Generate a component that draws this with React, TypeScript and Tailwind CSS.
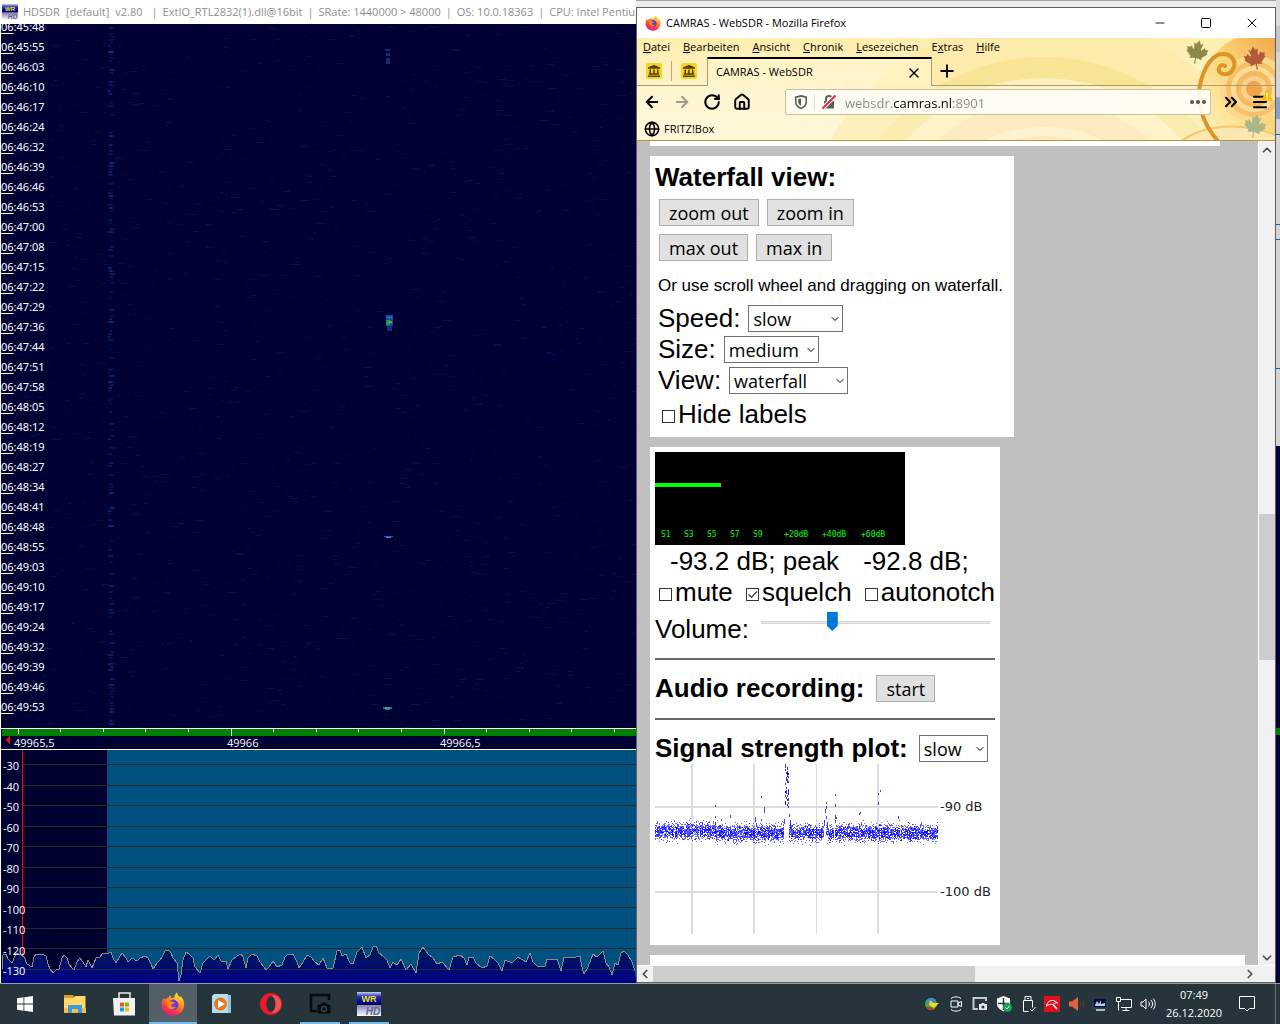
import type { ReactNode } from 'react';
import {
  ArrowLeft,
  ArrowRight,
  ChevronDown,
  ChevronLeft,
  ChevronRight,
  ChevronUp,
  ChevronsRight,
  Globe,
  House,
  Menu,
  Minus,
  Plus,
  RotateCw,
  Square,
  X,
} from 'lucide-react';
import { FaCanadianMapleLeaf, FaLandmark } from 'react-icons/fa';

const TIMES = [
  '45:48', '45:55', '46:03', '46:10', '46:17', '46:24', '46:32', '46:39', '46:46',
  '46:53', '47:00', '47:08', '47:15', '47:22', '47:29', '47:36', '47:44', '47:51',
  '47:58', '48:05', '48:12', '48:19', '48:27', '48:34', '48:41', '48:48', '48:55',
  '49:03', '49:10', '49:17', '49:24', '49:32', '49:39', '49:46', '49:53',
];

const STATUS = [
  'ExtIO_RTL2832(1).dll@16bit',
  'SRate: 1440000 > 48000',
  'OS: 10.0.18363',
  'CPU: Intel Pentium',
];

const TRACE =
  '2,219 3,205 6,204 8,209 12,213 13,211 16,203 21,205 24,207 27,214 32,217 34,207 36,204 42,204 46,206 48,214 50,219 53,223 56,220 59,219 62,208 64,205 67,208 69,214 72,218 74,220 77,212 80,208 83,212 86,217 88,210 92,218 96,208 100,207 103,203 107,204 111,202 113,208 116,213 119,208 122,203 126,208 128,212 132,208 137,211 140,208 145,206 148,208 151,214 153,219 157,213 160,210 162,207 165,201 168,200 171,203 173,208 177,213 179,231 181,225 183,210 186,202 189,204 193,208 195,217 200,223 203,213 207,209 210,206 214,210 218,205 221,211 226,211 228,219 232,210 237,206 241,204 243,207 246,218 248,208 252,204 257,206 260,212 266,220 269,217 273,211 277,217 282,215 285,207 288,204 293,204 297,212 299,218 303,212 307,205 311,207 315,212 319,215 323,208 327,218 333,218 337,201 340,200 342,206 346,204 350,213 353,214 357,202 362,197 366,208 370,205 373,197 376,196 379,203 383,206 387,210 390,218 393,212 397,215 401,209 406,220 411,214 416,223 419,203 423,197 428,204 433,208 437,214 442,212 449,220 453,207 460,205 464,208 467,215 469,207 473,207 476,213 482,218 487,216 490,206 494,209 498,213 502,221 505,210 512,213 518,207 526,212 530,203 533,212 537,216 545,216 547,209 557,209 561,221 564,207 572,208 580,206 582,217 584,224 588,217 593,204 597,207 603,201 606,213 609,217 612,225 615,213 618,215 621,203 624,201 628,205 632,212 635,221';

// small seeded generator so the noise is the same on every render
function createRandom(seed: number) {
  let s = seed;
  return () => {
    s = (s * 1664525 + 1013904223) % 4294967296;
    return s / 4294967296;
  };
}

const rand = createRandom(17);

const speckles = Array.from({ length: 1500 }, () => ({
  x: Math.floor(rand() * 635),
  y: Math.floor(rand() * 704),
  w: 3 + Math.floor(rand() * 6),
  o: 0.08 + rand() * 0.32,
}));

const carrier = Array.from({ length: 190 }, () => ({
  x: 107 + Math.floor(rand() * 3),
  y: Math.floor(rand() * 234) * 3,
  w: 3 + Math.floor(rand() * 3),
  o: 0.15 + rand() * 0.4,
}));

const plotNoise = Array.from({ length: 5200 }, () => {
  const x = Math.floor(rand() * 283);
  const center = x < 60 ? 67 : 69;
  const y = center + (rand() + rand() + rand() + rand() - 2) * 7;
  return { x, y: Math.floor(y) };
}).filter((p) => !(p.x > 128 && p.x < 134) && p.x !== 169 && p.x !== 170 && p.x !== 179);

const plotPeaks = Array.from({ length: 46 }, () => ({
  x: 130 + Math.floor(rand() * 4),
  y: Math.floor(rand() * 43),
}));

const PLOT_POINTS = [
  [60, 41, 2], [60, 52, 2], [60, 58, 3], [66, 55, 2], [75, 51, 3], [106, 32, 2],
  [106, 55, 2], [109, 43, 6], [100, 53, 5], [101, 59, 4], [129, 55, 5], [134, 50, 3],
  [135, 56, 8], [171, 38, 2], [171, 42, 3], [170, 45, 4], [171, 52, 3], [169, 56, 6],
  [172, 58, 5], [180, 30, 2], [180, 40, 3], [180, 51, 4], [181, 53, 2], [180, 56, 3],
  [204, 49, 2], [205, 48, 2], [204, 62, 2], [223, 29, 2], [225, 26, 2], [223, 38, 3],
  [224, 60, 2], [243, 52, 3],
];

function Waterfall() {
  return (
    <svg
      viewBox="0 0 635 704"
      preserveAspectRatio="none"
      shapeRendering="crispEdges"
      className="absolute inset-0 h-full w-full"
    >
      {speckles.map((s, i) => (
        <rect key={i} x={s.x} y={s.y} width={s.w} height="1" fill="#0b2f8a" opacity={s.o} />
      ))}
      {carrier.map((s, i) => (
        <rect key={i} x={s.x} y={s.y} width={s.w} height="2" fill="#10388c" opacity={s.o} />
      ))}
      <path d="M384 25h5v2h-5zM385 29h4v3h-4zM385 34h4v6h-4z" fill="#153f9c" opacity=".7" />
      <path d="M385 291h7v11h-7z" fill="#1b45b4" />
      <path d="M386 302h5v5h-5z" fill="#0f2f80" />
      <path d="M385 293h6v1h-6zM385 296h4v5h-4z" fill="#18a04a" />
      <path d="M388 297h3v2h-3z" fill="#7fc020" />
      <path d="M389 297h2v1h-2z" fill="#f04020" />
      <path d="M383 512h9v1h-9z" fill="#2060b0" />
      <path d="M385 513h5v1h-5z" fill="#3590c8" />
      <path d="M382 683h9v2h-9zM384 685h5v1h-5z" fill="#2060c8" />
      <path d="M384 683h5v2h-5z" fill="#30b050" />
    </svg>
  );
}

function Spectrum() {
  const lines = [14, 35, 55, 76, 96, 117, 137, 157, 178, 198];
  return (
    <svg
      viewBox="0 0 636 233"
      preserveAspectRatio="none"
      shapeRendering="crispEdges"
      className="absolute inset-0 h-full w-full"
    >
      <defs>
        <linearGradient id="trace" x1="0" y1="196" x2="0" y2="233" gradientUnits="userSpaceOnUse">
          <stop offset="0" stopColor="#001c50" />
          <stop offset="1" stopColor="#000088" />
        </linearGradient>
      </defs>
      <path d="M0 0h1v233h-1z" fill="#fff" />
      <path d="M107 0h529v233h-529z" fill="#005080" />
      {lines.map((y) => (
        <path key={y} d={`M22 ${y}h614v1h-614z`} fill="#2b2b2b" />
      ))}
      <path d="M22 0h1v205h-1z" fill="#f00" />
      <polygon points={`2,233 ${TRACE} 636,233`} fill="url(#trace)" />
      <path d="M22 219h614v1h-614z" fill="#2b2b3b" />
      <polyline points={TRACE} fill="none" stroke="#8b8b8b" />
    </svg>
  );
}

function HdsdrLogo({ className }: { className: string }) {
  return (
    <svg viewBox="0 0 24 24" className={className}>
      <defs>
        <linearGradient id="wr" x1="0" y1="0" x2="0" y2="1">
          <stop offset="0" stopColor="#c8d0f0" />
          <stop offset=".35" stopColor="#2030b0" />
          <stop offset=".8" stopColor="#0000a0" />
          <stop offset="1" stopColor="#000020" />
        </linearGradient>
        <linearGradient id="hd" x1="0" y1="0" x2="0" y2="1">
          <stop offset="0" stopColor="#8080b8" />
          <stop offset="1" stopColor="#fff" />
        </linearGradient>
      </defs>
      <path d="M0 0h24v13H0z" fill="url(#wr)" />
      <path d="M0 13h24v11H0z" fill="url(#hd)" />
      <text x="12" y="10" fontSize="9" fontWeight="700" textAnchor="middle" fill="#f0e020" fontFamily="Liberation Sans">
        WR
      </text>
      <text x="16" y="23" fontSize="10" fontWeight="700" fontStyle="italic" textAnchor="middle" fill="#66668a" fontFamily="Liberation Sans">
        HD
      </text>
    </svg>
  );
}

function FirefoxLogo({ className }: { className: string }) {
  return (
    <svg viewBox="0 0 24 24" className={className}>
      <defs>
        <linearGradient id="fox" x1=".8" y1="0" x2=".3" y2="1">
          <stop offset="0" stopColor="#fff44f" />
          <stop offset=".4" stopColor="#ff980e" />
          <stop offset=".75" stopColor="#ff3647" />
          <stop offset="1" stopColor="#e31587" />
        </linearGradient>
      </defs>
      <path
        d="M2.5 6.2c.5 0 1 .8 1.300 1.200C5 6.300 6 6 7.300 5.900c.6-1.200 1.700-2 2.600-2.300-.2 1 .2 2.100 1 2.700 1.200-.3 2-.6 2.600-1.800C13.700 2.800 14.800 1.200 16 .4c.2 2.400 1.800 3.600 3.200 5 .1-.6 0-1-.2-1.600 2.600 1.900 4.200 5.200 4.200 8.900C23.200 18.800 18.200 23.600 12 23.600S.8 18.900.8 12.900C.8 10.200 1.600 7.800 2.500 6.200z"
        fill="url(#fox)"
      />
      <circle cx="12.300" cy="12.800" r="5.200" fill="#6b3bd8" />
      <path d="M6 9.500c2-.9 4-.6 5.800.5l1.900.6c-.2 1.200-1.700 1.400-2.700 1.700-.8.400-1 1.300-.4 2 1 1.200 3 .8 4.300.1-1 2.400-3.200 3.300-5.400 2.600C6.800 16 5.300 12.700 6 9.500z" fill="#ff8a16" />
      <path d="M15.500 6.300c1.800 1.500 3 3.600 2.900 5.900-.9-2.700-2.500-3.600-4.400-4.400z" fill="#ffbd2e" />
    </svg>
  );
}

function HdsdrWindow() {
  return (
    <section className="flex min-w-0 flex-1 flex-col bg-[#000033]">
      <header className="flex h-6 items-center overflow-hidden bg-white pl-0.5 text-[11px] whitespace-nowrap text-[#8e8e8e]">
        <HdsdrLogo className="mr-[5px] h-4 w-4 shrink-0" />
        <span className="mr-1.5">HDSDR</span>
        <span className="mr-1.5">[default]</span>
        <span className="mr-1">v2.80</span>
        {STATUS.map((item) => (
          <span key={item}>
            <span className="mx-[5px]">|</span>
            {item}
          </span>
        ))}
      </header>

      <div className="relative flex-1 overflow-hidden border-l border-white">
        <Waterfall />
        <ol className="relative -mt-[7px] font-['Noto_Sans',sans-serif] text-[11px] leading-5 text-white">
          {TIMES.map((time) => (
            <li key={time} className="h-5">
              <span className="underline underline-offset-2">06</span>:{time}
            </li>
          ))}
        </ol>
      </div>

      <div className="relative h-[22px] border-y border-l border-white">
        <svg
          viewBox="0 0 635 20"
          preserveAspectRatio="none"
          shapeRendering="crispEdges"
          className="absolute inset-0 h-full w-full"
        >
          <path d="M1 0h634v7H1z" fill="#008000" />
          <path d="M9 6v10l-5-5z" fill="#f00" />
          <path
            d="M17 0h1v5h-1zM59 0h1v3h-1zM102 0h1v3h-1zM144 0h1v3h-1zM187 0h1v3h-1zM230 0h1v7h-1zM272 0h1v3h-1zM315 0h1v3h-1zM357 0h1v3h-1zM400 0h1v3h-1zM443 0h1v5h-1zM485 0h1v3h-1zM528 0h1v3h-1zM570 0h1v3h-1zM613 0h1v3h-1z"
            fill="#fff"
          />
        </svg>
        <div className="relative flex h-5 items-end pl-[13px] text-[11px] leading-[13px] text-white">
          <span className="w-[213px]">49965,5</span>
          <span className="w-[213px]">49966</span>
          <span>49966,5</span>
        </div>
      </div>

      <div className="relative h-[233px] overflow-hidden bg-[#000030]">
        <Spectrum />
        <div className="relative flex flex-col pt-[5px] pl-[3px] text-[11px] text-white">
          {[-30, -40, -50, -60, -70, -80, -90, -100, -110, -120, -130].map((db) => (
            <span key={db} className="h-[21px] leading-[21px] even:h-5">
              {db}
            </span>
          ))}
        </div>
      </div>
    </section>
  );
}

function Rings({ cx, cy, rings }: { cx: number; cy: number; rings: [number, string][] }) {
  return (
    <>
      {rings.map(([r, fill]) => (
        <circle key={r} cx={cx} cy={cy} r={r} fill={fill} />
      ))}
    </>
  );
}

function ThemeArt() {
  return (
    <svg viewBox="0 0 638 103" preserveAspectRatio="xMaxYMin slice" className="absolute inset-0 h-full w-full">
      <defs>
        <linearGradient id="sky" x1="0" y1="0" x2="0" y2="1">
          <stop offset="0" stopColor="#fdeeae" />
          <stop offset=".5" stopColor="#fef3c8" />
          <stop offset="1" stopColor="#fff6d6" />
        </linearGradient>
        <linearGradient id="glow" x1="0" y1="1" x2="1" y2="0">
          <stop offset="0" stopColor="#fff3c0" />
          <stop offset=".5" stopColor="#fbd878" />
          <stop offset="1" stopColor="#f0a040" />
        </linearGradient>
      </defs>
      <rect width="638" height="103" fill="url(#sky)" />
      <Rings
        cx={407}
        cy={224}
        rings={[
          [246, '#fcebaa'],
          [205, '#f8e495'],
          [184, '#fdf0bd'],
          [162, '#fbe3b0'],
          [135, '#fef0c8'],
          [126, '#fbe0ae'],
          [110, '#fef0c8'],
        ]}
      />
      <rect y="48" width="638" height="55" fill="#fff8e0" opacity=".35" />
      <path d="M570 103C556 60 566 12 600 0h38v103z" fill="url(#glow)" opacity=".9" />
      <Rings
        cx={617}
        cy={51}
        rings={[
          [34, '#fbd98c'],
          [28, '#f6c168'],
          [23, '#fbdc98'],
          [18, '#f5b95f'],
          [13, '#fad08a'],
          [8, '#f0a54c'],
        ]}
      />
      <path d="M545 103c20-16 60-20 93-6v6z" fill="#fce7b0" />
      <path d="M545 103c20-16 60-20 93-6" fill="none" stroke="#f6c56c" strokeWidth="2" />
      <path
        d="M581 103c-16-18-22-40-18-56 4-18 12-31 23-31 9 0 14 8 10 15-4 8-16 6-14-1 1-3 4-4 6-2"
        fill="none"
        stroke="#dd9426"
        strokeWidth="4"
        strokeLinecap="round"
      />
    </svg>
  );
}

const MENU = ['Datei', 'Bearbeiten', 'Ansicht', 'Chronik', 'Lesezeichen'];

function BrowserChrome() {
  return (
    <>
      <header className="flex h-[30px] items-center bg-white pl-2 text-[11px]">
        <FirefoxLogo className="mr-[5px] h-4 w-4" />
        <h1 className="flex-1">CAMRAS - WebSDR - Mozilla Firefox</h1>
        <button aria-label="Minimieren" className="flex w-[46px] justify-center">
          <Minus className="h-3.5 w-3.5" strokeWidth={1.5} />
        </button>
        <button aria-label="Maximieren" className="flex w-[46px] justify-center">
          <Square className="h-3 w-3" strokeWidth={2} />
        </button>
        <button aria-label="Fenster schließen" className="flex w-[46px] justify-center">
          <X className="h-4 w-4" strokeWidth={1.5} />
        </button>
      </header>

      <div className="relative border-b border-[#b8963c]">
        <ThemeArt />
        <FaCanadianMapleLeaf className="absolute top-0.5 right-[66px] h-6 w-6 rotate-12 text-[#8b8a48]" />
        <FaCanadianMapleLeaf className="absolute top-2 right-2 h-6 w-6 -rotate-12 text-[#b05a38]" />
        <FaCanadianMapleLeaf className="absolute right-2 bottom-0.5 h-6 w-6 rotate-12 text-[#a9b888]" />

        <nav className="relative flex h-[19px] items-center gap-[13px] pl-1.5 text-[11px]">
          {MENU.map((item) => (
            <a key={item} href="#">
              <u>{item[0]}</u>
              {item.slice(1)}
            </a>
          ))}
          <a href="#">
            E<u>x</u>tras
          </a>
          <a href="#">
            <u>H</u>ilfe
          </a>
        </nav>

        <div className="relative flex h-[29px] text-[11px]">
          <div className="flex w-[70px] items-center border-b border-[#a89c6c] pl-[9px]">
            <span className="flex h-4 w-4 items-center justify-center rounded-xs bg-[#fcd21c]">
              <FaLandmark className="h-3 w-3 text-[#4a4216]" />
            </span>
            <span className="mx-[9px] h-5 w-px bg-[#b5ab84]" />
            <span className="flex h-4 w-4 items-center justify-center rounded-xs bg-[#fcd21c]">
              <FaLandmark className="h-3 w-3 text-[#4a4216]" />
            </span>
          </div>
          <div className="flex w-[225px] items-center justify-between border-x border-t-2 border-x-[#a89c6c] border-t-black bg-[#fff6cf]/60 pr-[9px] pl-2">
            CAMRAS - WebSDR
            <button aria-label="Tab schließen">
              <X className="h-4 w-4" strokeWidth={2} />
            </button>
          </div>
          <div className="flex flex-1 items-center border-b border-[#a89c6c] pl-[5px]">
            <button aria-label="Neuer Tab">
              <Plus className="h-5 w-5" strokeWidth={2.2} />
            </button>
          </div>
        </div>

        <div className="relative flex h-8 items-center pr-1.5 pl-1.5">
          <button aria-label="Zurück" className="mr-3">
            <ArrowLeft className="h-[18px] w-[18px]" strokeWidth={2.6} />
          </button>
          <button aria-label="Vor" className="mr-3 text-[#a09a85]">
            <ArrowRight className="h-[18px] w-[18px]" strokeWidth={2.6} />
          </button>
          <button aria-label="Neu laden" className="mr-3">
            <RotateCw className="h-[18px] w-[18px]" strokeWidth={2.8} />
          </button>
          <button aria-label="Startseite" className="mr-[34px]">
            <House className="h-[18px] w-[18px]" strokeWidth={2.6} />
          </button>
          <div className="flex h-[26px] flex-1 items-center rounded-xs border border-[#c9c0a0] bg-[#fffdf6]/90 pr-1 pl-2">
            <svg viewBox="0 0 16 16" className="h-3.5 w-3.5 text-[#5c5c55]">
              <path d="M8 1l6 1.500v5C14 11 11.500 14 8 15.300 4.500 14 2 11 2 7.500v-5z" fill="none" stroke="currentColor" strokeWidth="1.800" />
              <path d="M8 4v8.500C6 11.500 4.800 9.700 4.800 7.500V4.700z" fill="currentColor" />
            </svg>
            <span className="mx-1.5 h-4 w-px bg-[#ddd]" />
            <svg viewBox="0 0 16 16" className="h-4 w-4">
              <path d="M5 7V5a3 3 0 0 1 6 0v2" fill="none" stroke="#5c5c55" strokeWidth="2" />
              <path d="M3 7h10v7.500H3z" fill="#5c5c55" />
              <path d="M1.500 14.500l13-13" stroke="#fffdf6" strokeWidth="4" />
              <path d="M1.500 14.500l13-13" stroke="#e22850" strokeWidth="2" />
            </svg>
            <input
              aria-label="Adresse"
              defaultValue="websdr.camras.nl:8901"
              className="ml-2 h-6 min-w-0 flex-1 bg-[linear-gradient(90deg,#888_0_47px,#000_47px_107px,#888_107px)] bg-clip-text pt-0.5 text-[13px] text-transparent outline-none"
            />
            <svg viewBox="0 0 16 4" className="h-1 w-4 text-[#555]" fill="currentColor">
              <circle cx="2" cy="2" r="2" />
              <circle cx="8" cy="2" r="2" />
              <circle cx="14" cy="2" r="2" />
            </svg>
          </div>
          <button aria-label="Weitere Werkzeuge" className="ml-2.5">
            <ChevronsRight className="h-5 w-5" strokeWidth={2.6} />
          </button>
          <button aria-label="Menü" className="relative ml-2.5">
            <Menu className="h-[18px] w-[18px]" strokeWidth={2.6} />
            <svg viewBox="0 0 12 12" className="absolute -top-1 -right-1 h-3 w-3">
              <path d="M6 0l6 12H0z" fill="#ffbf00" />
              <path d="M6 4v4M6 9v1.500" stroke="#fff" strokeWidth="1.500" />
            </svg>
          </button>
        </div>

        <a href="#" className="relative flex h-[22px] items-center gap-1 pl-[7px] text-[11px]">
          <Globe className="h-4 w-4" strokeWidth={2.4} />
          FRITZ!Box
        </a>
      </div>
    </>
  );
}

function SdrButton({ children }: { children: ReactNode }) {
  return (
    <button className="h-[27px] border border-[#adadad] bg-[#e1e1e1] px-[9px] pt-0.5 font-['Open_Sans',sans-serif] text-[18px] leading-[23px]">
      {children}
    </button>
  );
}

function SdrSelect({ id, options, className }: { id: string; options: string[]; className: string }) {
  return (
    <span className={`relative ${className}`}>
      <select
        id={id}
        className="block h-[27px] w-full appearance-none border border-[#707070] bg-white pt-0.5 pl-1 font-['Open_Sans',sans-serif] text-[18px] leading-[23px]"
      >
        {options.map((option) => (
          <option key={option}>{option}</option>
        ))}
      </select>
      <ChevronDown className="pointer-events-none absolute top-2 right-0.5 h-3 w-3" strokeWidth={2} />
    </span>
  );
}

function SdrCheckbox({ id, label, checked }: { id: string; label: string; checked?: boolean }) {
  return (
    <span className="flex items-center">
      <span className="relative mt-1 mr-[3px] flex">
        <input
          id={id}
          type="checkbox"
          defaultChecked={checked}
          className="peer h-[13px] w-[13px] appearance-none border border-[#333] bg-white"
        />
        <svg viewBox="0 0 13 13" className="pointer-events-none absolute inset-0 hidden h-full w-full peer-checked:block">
          <path d="M2.500 6.500l3 3 5.500-6" fill="none" stroke="#333" strokeWidth="1.200" />
        </svg>
      </span>
      <label htmlFor={id}>{label}</label>
    </span>
  );
}

function WaterfallPanel() {
  return (
    <div className="w-[364px] bg-white px-[5px] pt-1.5 pb-[7px]">
      <h2 className="font-bold">Waterfall view:</h2>
      <div className="mt-1.5 ml-1 flex gap-2">
        <SdrButton>zoom out</SdrButton>
        <SdrButton>zoom in</SdrButton>
      </div>
      <div className="mt-2 ml-1 flex gap-2">
        <SdrButton>max out</SdrButton>
        <SdrButton>max in</SdrButton>
      </div>
      <p className="mt-[13px] ml-[3px] text-[17px] leading-6 whitespace-nowrap">
        Or use scroll wheel and dragging on waterfall.
      </p>
      <div className="mt-[5px] ml-[3px] flex h-[31px] items-center gap-2">
        <label htmlFor="speed">Speed:</label>
        <SdrSelect id="speed" options={['slow', 'medium', 'fast']} className="w-[95px]" />
      </div>
      <div className="ml-[3px] flex h-[31px] items-center gap-2">
        <label htmlFor="size">Size:</label>
        <SdrSelect id="size" options={['medium', 'small', 'large']} className="w-[95px]" />
      </div>
      <div className="ml-[3px] flex h-[31px] items-center gap-2">
        <label htmlFor="view">View:</label>
        <SdrSelect id="view" options={['waterfall', 'spectrum']} className="w-[119px]" />
      </div>
      <div className="mt-[3px] ml-[7px]">
        <SdrCheckbox id="hide-labels" label="Hide labels" />
      </div>
    </div>
  );
}

function SignalMeter() {
  const scale: [number, string][] = [
    [6, 'S1'], [29, 'S3'], [52, 'S5'], [75, 'S7'], [98, 'S9'],
    [129, '+20dB'], [167, '+40dB'], [206, '+60dB'],
  ];
  return (
    <svg viewBox="0 0 250 93" className="block h-[93px] w-[250px] bg-black">
      <path d="M0 31h65v4H0z" fill="#0f0" />
      <path d="M65 31h1v4h-1z" fill="#f80" />
      {scale.map(([x, label]) => (
        <text key={label} x={x} y="85" fontSize="8" fill="#0f0" fontFamily="DejaVu Sans Mono, monospace">
          {label}
        </text>
      ))}
    </svg>
  );
}

function SignalPlot() {
  return (
    <svg viewBox="0 0 340 170" className="block h-[170px] w-[340px]">
      <g fill="#dcdcdc" shapeRendering="crispEdges">
        <path d="M36 0h2v170h-2zM98 0h2v170h-2zM161 0h1v170h-1zM222 0h2v170h-2z" />
        <path d="M0 42h283v2H0zM0 127h283v2H0z" />
      </g>
      <g fill="#0000ff" shapeRendering="crispEdges">
        {plotNoise.map((p, i) => (
          <rect key={i} x={p.x} y={p.y} width="1" height="1" opacity=".6" />
        ))}
        {plotPeaks.map((p, i) => (
          <rect key={i} x={p.x} y={p.y} width="1" height="2" opacity=".8" />
        ))}
        {PLOT_POINTS.map(([x, y, h]) => (
          <rect key={`${x}-${y}`} x={x} y={y} width="1" height={h} opacity=".75" />
        ))}
      </g>
      <g fontSize="13" fill="#222" fontFamily="DejaVu Sans, sans-serif">
        <text x="285" y="47">-90 dB</text>
        <text x="285" y="132">-100 dB</text>
      </g>
    </svg>
  );
}

function AudioPanel() {
  return (
    <div className="mt-2.5 w-[350px] bg-white px-[5px] pt-[5px] pb-[11px]">
      <SignalMeter />
      <div className="mt-px flex gap-6 pl-[15px] whitespace-nowrap">
        <span>-93.2 dB; peak</span>
        <span>-92.8 dB;</span>
      </div>
      <div className="flex justify-between pl-1 whitespace-nowrap">
        <SdrCheckbox id="mute" label="mute" />
        <SdrCheckbox id="squelch" label="squelch" checked />
        <SdrCheckbox id="autonotch" label="autonotch" />
      </div>
      <div className="mt-[5px] flex pr-[5px]">
        <label htmlFor="volume" className="mt-px mr-3">
          Volume:
        </label>
        <input
          id="volume"
          type="range"
          min="0"
          max="100"
          defaultValue="30"
          className="h-[19px] min-w-0 flex-1 appearance-none bg-transparent [&::-webkit-slider-runnable-track]:h-[3px] [&::-webkit-slider-runnable-track]:border [&::-webkit-slider-runnable-track]:border-[#d6d6d6] [&::-webkit-slider-runnable-track]:bg-[#e7e7e7] [&::-webkit-slider-thumb]:-mt-[10px] [&::-webkit-slider-thumb]:h-[19px] [&::-webkit-slider-thumb]:w-[11px] [&::-webkit-slider-thumb]:appearance-none [&::-webkit-slider-thumb]:bg-[#0078d7] [&::-webkit-slider-thumb]:[clip-path:polygon(0_0,100%_0,100%_72%,50%_100%,0_72%)]"
        />
      </div>
      <hr className="mt-[13px] border-t-2 border-[#666]" />
      <div className="mt-[13px] flex h-[31px] items-center gap-3">
        <h2 className="font-bold">Audio recording:</h2>
        <SdrButton>start</SdrButton>
      </div>
      <hr className="mt-[14px] border-t-2 border-[#666]" />
      <div className="mt-[13px] flex h-[31px] items-center gap-[11px] whitespace-nowrap">
        <label htmlFor="plot-speed" className="font-bold">
          Signal strength plot:
        </label>
        <SdrSelect id="plot-speed" options={['slow', 'fast']} className="w-[69px]" />
      </div>
      <SignalPlot />
    </div>
  );
}

function BrowserWindow() {
  return (
    <section className="flex w-1/2 flex-col">
      <div className="h-[7px] border-t border-[#a3a3a6] bg-[#ececee]" />
      <div className="flex flex-1 flex-col border border-[#606060] bg-[#c0c0c0] text-black">
        <BrowserChrome />
        <div className="flex min-h-0 flex-1">
          <main className="flex min-w-0 flex-1 flex-col overflow-hidden pl-[13px] font-['Liberation_Sans',Arial,sans-serif] text-[26px] leading-[31px]">
            <div className="mr-[38px] mb-2.5 h-[5px] shrink-0 bg-white" />
            <WaterfallPanel />
            <AudioPanel />
            <div className="mt-2.5 mr-[13px] flex-1 bg-white" />
          </main>
          <div className="flex w-[17px] flex-col items-center border-l border-white bg-[#f0f0f0] text-[#505050]">
            <ChevronUp className="my-0.5 h-3.5 w-3.5" strokeWidth={3} />
            <div className="flex-[355]" />
            <div className="w-full flex-[145] bg-[#cdcdcd]" />
            <div className="flex-[291]" />
            <ChevronDown className="h-3.5 w-3.5" strokeWidth={3} />
          </div>
        </div>
        <div className="flex h-[17px] items-center border-t border-white bg-[#f0f0f0] pr-[17px] text-[#505050]">
          <ChevronLeft className="mx-px h-3.5 w-3.5" strokeWidth={3} />
          <div className="h-full flex-[321] bg-[#cdcdcd]" />
          <div className="flex-[266]" />
          <ChevronRight className="mx-px h-3.5 w-3.5" strokeWidth={3} />
        </div>
      </div>
    </section>
  );
}

// sliver of the windows that stay visible behind the browser
function BackgroundEdge() {
  return (
    <div className="flex w-1 flex-col overflow-hidden bg-[#d4d4d4]">
      <div className="h-[26px] bg-[#dcdcdc]" />
      <div className="h-[26px] bg-[#c4c4c4]" />
      <div className="h-[46px] border-b border-[#aaa]" />
      <div className="h-[21px] bg-[#86a3cb]" />
      <div className="h-4 border-b border-[#0a64ad]" />
      <div className="h-[90px] border-b border-[#0a64ad]" />
      <div className="h-[15px] border-b border-[#0a64ad]" />
      <div className="h-[129px] border-b border-[#0a64ad]" />
      <div className="h-[77px]" />
      <div className="h-[282px] bg-[#000033]" />
      <div className="h-[7px] bg-[#008000]" />
      <div className="flex-1 bg-[#000033]" />
    </div>
  );
}

function TaskButton({
  label,
  active,
  open,
  children,
}: {
  label: string;
  active?: boolean;
  open?: boolean;
  children: ReactNode;
}) {
  return (
    <button
      aria-label={label}
      className={`relative flex h-10 w-12 items-center justify-center ${active ? 'bg-[#545f67]' : ''}`}
    >
      {children}
      {active && <span className="absolute inset-x-0 bottom-0 h-0.5 bg-[#76b9ed]" />}
      {open && <span className="absolute inset-x-1 bottom-0 h-0.5 bg-[#76b9ed]" />}
    </button>
  );
}

function TrayIcon({ children }: { children: ReactNode }) {
  return (
    <span className="flex w-6 justify-center">
      <svg viewBox="0 0 16 16" className="h-4 w-4">
        {children}
      </svg>
    </span>
  );
}

function Taskbar() {
  return (
    <footer className="flex h-[41px] items-center justify-between border-t border-[#9a9da0] bg-[#26343b] text-white">
      <div className="flex gap-px">
        <button aria-label="Start" className="flex w-[50px] items-center justify-center">
          <svg viewBox="0 0 16 16" className="h-4 w-4" fill="#fff">
            <path d="M0 2.200l6.500-.9v6.300H0zM7.300 1.200L16 0v7.600H7.300zM0 8.400h6.500v6.300L0 13.800zM7.300 8.400H16V16l-8.700-1.200z" />
          </svg>
        </button>
        <TaskButton label="Explorer">
          <svg viewBox="0 0 22 20" className="h-5 w-[22px]">
            <path d="M0 1h9l1.500 2.500H0z" fill="#e09c10" />
            <path d="M0 3.500h10l1-1.500h10.500v17H0z" fill="#ffd869" />
            <path d="M0 14h22v5H0z" fill="#f4bd48" />
            <path d="M4 19v-8h14v8h-4v-4H8v4z" fill="#3a9be0" />
          </svg>
        </TaskButton>
        <TaskButton label="Store">
          <svg viewBox="0 0 24 24" className="h-6 w-6">
            <path d="M7 7V1h11v6" fill="none" stroke="#eee" strokeWidth="1.500" />
            <path d="M1 6h22v17.500H2z" fill="#f2f2f2" />
            <path d="M8 10.500h4v4H8z" fill="#f25022" />
            <path d="M13 10.500h4v4h-4z" fill="#7fba00" />
            <path d="M8 15.500h4v4H8z" fill="#00a4ef" />
            <path d="M13 15.500h4v4h-4z" fill="#ffb900" />
          </svg>
        </TaskButton>
        <TaskButton label="Firefox" active>
          <FirefoxLogo className="h-6 w-6" />
        </TaskButton>
        <TaskButton label="Media Player">
          <svg viewBox="0 0 20 20" className="h-5 w-5">
            <path d="M4 1h15v18H4z" fill="#8cc4dc" />
            <path d="M2 0h14v19H0V2z" fill="#b5dff0" />
            <circle cx="8.500" cy="10" r="6.500" fill="#ef7518" />
            <path d="M6 6l7 4-7 4z" fill="#fff" />
          </svg>
        </TaskButton>
        <TaskButton label="Opera">
          <svg viewBox="0 0 24 24" className="h-6 w-6">
            <path d="M12 1a11 11 0 1 0 0 22 11 11 0 1 0 0-22zm0 3c3 0 4.500 4 4.500 8S15 20 12 20s-4.500-4-4.500-8S9 4 12 4z" fill="#f01828" fillRule="evenodd" />
            <path d="M12 4c2-1.500 5-1 7 1 4 4 4 10 0 14-2 2-5 2.500-7 1 3 0 4.500-4 4.500-8S15 4 12 4z" fill="#f25555" />
          </svg>
        </TaskButton>
        <TaskButton label="Aufnahme" open>
          <svg viewBox="0 0 24 24" className="h-6 w-6" fill="none" stroke="#080c0e" strokeWidth="2.500">
            <path d="M21 8V3H3v16h6M3 7V3h4" />
            <path d="M10 13h3l1-2h4l1 2h3v8H10z" fill="#080c0e" strokeWidth="1" />
            <circle cx="16" cy="17" r="2.500" stroke="#34434b" strokeWidth="1.500" />
          </svg>
        </TaskButton>
        <TaskButton label="HDSDR" open>
          <HdsdrLogo className="h-6 w-6" />
        </TaskButton>
      </div>

      <div className="flex h-full items-center text-[11px]">
        <TrayIcon>
          <circle cx="7" cy="8" r="6" fill="#3fae3a" />
          <path d="M1.500 5.500C3 2 9 1 12 4L8 8z" fill="#3f86e8" />
          <path d="M6 4l3 3h6l-5 5-5-3z" fill="#f3d52c" />
          <path d="M2 11c2 3 6 4 9 2l-5-2z" fill="#d3391c" />
        </TrayIcon>
        <TrayIcon>
          <path d="M3 2.500C6 .3 10 .3 13 2.500M3 13.500c3 2.200 7 2.200 10 0M3 5h7v6H3zM10 7l3.500-1.500v5L10 9z" fill="none" stroke="#fff" />
        </TrayIcon>
        <TrayIcon>
          <path d="M14 5V2H1.500v11H6" fill="none" stroke="#c5c9cb" strokeWidth="2" />
          <path d="M7 8h2l1-1h2l1 1h2v6H7z" fill="#e8e8e8" />
          <circle cx="11" cy="11" r="1.500" fill="#26343b" />
        </TrayIcon>
        <TrayIcon>
          <path d="M7.500 0L14 2.500v5c0 4-3 6-6.500 8C4 13.500 1 11.500 1 7.500v-5z" fill="#fff" />
          <path d="M7.500 2v12M2 7.500h11" stroke="#26343b" strokeWidth="1.500" />
          <circle cx="11.500" cy="11.500" r="4.500" fill="#12a05c" />
          <path d="M9.500 11.500l1.500 1.500 2.500-3" fill="none" stroke="#fff" />
        </TrayIcon>
        <TrayIcon>
          <path d="M5 4.500v-4h6v4M3.500 4.500h9v7M3.500 4.500v11h5M10 13l2 2 3.500-4M7 2.500h2" fill="none" stroke="#fff" />
        </TrayIcon>
        <TrayIcon>
          <path d="M0 0h16v16H0z" fill="#e0101c" />
          <path d="M2.500 10C3 5 9 2 13.500 7c-2-.5-3.500 0-4.500 1.500C7 8 4.500 8.500 2.500 10z" fill="none" stroke="#fff" />
          <path d="M9 8.500l4 4.500" stroke="#fff" strokeWidth="1.500" />
        </TrayIcon>
        <TrayIcon>
          <path d="M1 5.500h3L10 1v14l-6-4.500H1z" fill="#e0643c" />
          <path d="M12 5c1.500 2 1.500 4 0 6M14 3c2.500 3 2.500 7 0 10" fill="none" stroke="#6b3a2e" />
        </TrayIcon>
        <TrayIcon>
          <path d="M1 2h14v10H1z" fill="#06102a" stroke="#3c4c66" />
          <path d="M3 9l2-4 2 3 2-4v4l4-1v3H3z" fill="#9fd0ff" />
          <path d="M4 14h9" stroke="#b0b8c0" strokeWidth="2" />
        </TrayIcon>
        <TrayIcon>
          <path d="M5 3.500h10.500v8H5M10 11.500v3M6.500 14.500h7M.5 1.500h4v4h-4zM2.500 5.500v9" fill="none" stroke="#fff" />
        </TrayIcon>
        <TrayIcon>
          <path d="M1 6h2l3-3v10l-3-3H1zM8.500 5.500c1.300 1.500 1.300 3.500 0 5M11 4c2 2.500 2 5.500 0 8M13.300 2.500c2.500 3.300 2.500 7.700 0 11" fill="none" stroke="#fff" />
        </TrayIcon>
        <time className="flex w-[68px] flex-col items-center leading-[18px]">
          <span>07:49</span>
          <span>26.12.2020</span>
        </time>
        <button aria-label="Benachrichtigungen" className="mr-[9px] flex w-[38px] justify-center">
          <svg viewBox="0 0 16 16" className="h-4 w-4">
            <path d="M.5.5h15v12h-5l-2.500 2.500-2.500-2.500h-5z" fill="none" stroke="#fff" />
          </svg>
        </button>
        <span className="h-full w-[5px] border-l border-[#6a757b]" />
      </div>
    </footer>
  );
}

export default function App() {
  return (
    <div className="flex min-h-screen flex-col font-['Open_Sans','Noto_Sans',sans-serif]">
      <div className="flex flex-1">
        <HdsdrWindow />
        <BrowserWindow />
        <BackgroundEdge />
      </div>
      <Taskbar />
    </div>
  );
}
